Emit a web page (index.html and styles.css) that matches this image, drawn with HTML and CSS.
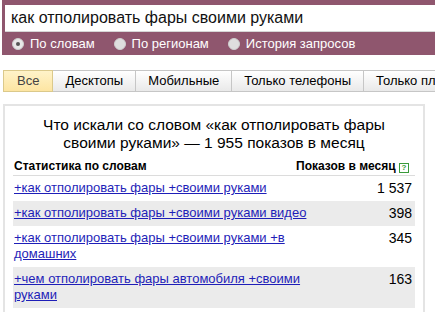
FILE: index.html
```html
<!DOCTYPE html>
<html lang="ru">
<head>
    <meta charset="UTF-8">
    <title>Подбор слов</title>
    <link rel="stylesheet" href="styles.css">
</head>
<body>
<div class="topbar">
    <div class="search">
        <input type="text" class="search-input" value="как отполировать фары своими руками">
    </div>
    <div class="modes">
        <label class="mode"><span class="radio checked"></span>По словам</label>
        <label class="mode"><span class="radio"></span>По регионам</label>
        <label class="mode"><span class="radio"></span>История запросов</label>
    </div>
</div>

<div class="tabs">
    <span class="tab active">Все</span>
    <span class="tab">Десктопы</span>
    <span class="tab">Мобильные</span>
    <span class="tab">Только телефоны</span>
    <span class="tab">Только планшеты</span>
</div>

<div class="result">
    <h2 class="result-title">Что искали со словом «как отполировать фары своими руками» — 1 955 показов в месяц</h2>
    <div class="stats-head">
        <span>Статистика по словам</span>
        <span>Показов в месяц <span class="help">?</span></span>
    </div>
    <table class="stats">
        <tr>
            <td><a href="#">+как отполировать фары +своими руками</a></td>
            <td class="count">1 537</td>
        </tr>
        <tr class="odd">
            <td><a href="#">+как отполировать фары +своими руками видео</a></td>
            <td class="count">398</td>
        </tr>
        <tr>
            <td><a href="#">+как отполировать фары +своими руками +в домашних</a></td>
            <td class="count">345</td>
        </tr>
        <tr class="odd">
            <td><a href="#">+чем отполировать фары автомобиля +своими руками</a></td>
            <td class="count">163</td>
        </tr>
        <tr>
            <td><a href="#">+как отполировать фары +своими руками +от</a></td>
            <td class="count">94</td>
        </tr>
    </table>
</div>
</body>
</html>
```

FILE: styles.css
```css
body {
    margin: 0;
    font-family: Arial, "Liberation Sans", sans-serif;
    background-color: #fff;
    overflow: hidden;
    width: 435px;
    height: 312px;
}

.topbar {
    margin-left: 2px;
    background-color: #8f566e;
    padding-top: 5px;
    height: 50px;
    overflow: hidden;
}

.search {
    padding-left: 3px;
}

.search-input {
    display: block;
    box-sizing: border-box;
    width: 430px;
    height: 27px;
    margin: 0;
    padding: 0 6px;
    border: none;
    border-bottom: 1px solid #d6d6d6;
    font-family: Arial, "Liberation Sans", sans-serif;
    font-size: 16px;
    color: #111;
    outline: none;
}

.modes {
    display: flex;
    padding: 5px 0 0 10px;
}

.mode {
    display: flex;
    align-items: center;
    color: #fff;
    font-size: 13px;
    line-height: 14px;
    margin-right: 19px;
}

.radio {
    width: 10px;
    height: 10px;
    border-radius: 50%;
    background-color: #dedede;
    border: 1px solid #cfcfcf;
    margin-right: 6px;
    position: relative;
}

.radio.checked {
    background-color: #e8e8e8;
}

.radio.checked::after {
    content: "";
    position: absolute;
    left: 3px;
    top: 3px;
    width: 4px;
    height: 4px;
    border-radius: 50%;
    background-color: #555;
}

.tabs {
    display: flex;
    margin: 15px 0 0 3px;
    white-space: nowrap;
    overflow: hidden;
}

.tab {
    box-sizing: border-box;
    height: 22px;
    line-height: 20px;
    padding: 0 12px;
    font-size: 13px;
    color: #000;
    border: 1px solid #c6c6c6;
    border-left: none;
    background: linear-gradient(#fff, #e9e9e9);
}

.tab:first-child {
    border-left: 1px solid #c6c6c6;
    padding: 0 13px;
}

.tab.active {
    color: #444;
    border-color: #dbc98b;
    background: linear-gradient(#fff3c9, #fde5a2);
}

.result {
    margin: 12px 0 0 3px;
    border: 2px solid #e4e4e4;
    border-bottom: none;
    padding: 0 8px;
    box-sizing: border-box;
    width: 422px;
}

.result-title {
    margin: 10px auto 7px;
    width: 350px;
    font-size: 15.5px;
    font-weight: normal;
    line-height: 18px;
    text-align: center;
    color: #000;
}

.stats-head {
    display: flex;
    justify-content: space-between;
    font-size: 12px;
    font-weight: bold;
    line-height: 14px;
    padding: 0 6px 2px 1px;
    border-bottom: 1px solid #dcdcdc;
}

.help {
    display: inline-block;
    box-sizing: border-box;
    width: 10px;
    height: 10px;
    line-height: 8px;
    font-size: 8px;
    text-align: center;
    color: #3a9a3a;
    border: 1px solid #3a9a3a;
    vertical-align: 0;
}

.stats {
    width: 100%;
    border-collapse: collapse;
    font-size: 13px;
}

.stats td {
    padding: 4px 3px 5px 1px;
    line-height: 16px;
    vertical-align: top;
}

.stats tr.odd td {
    background-color: #ebebeb;
}

.stats a {
    color: #1e1eb8;
    text-decoration: underline;
}

.stats td:first-child {
    width: 318px;
}

.stats td.count {
    text-align: right;
    font-size: 14px;
    color: #000;
}
```
